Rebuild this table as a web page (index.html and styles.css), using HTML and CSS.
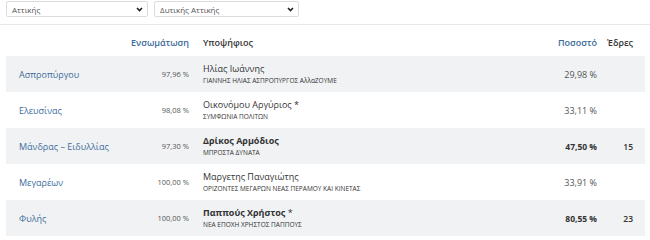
FILE: index.html
```html
<!DOCTYPE html>
<html lang="el">
<head>
<meta charset="utf-8">
<link rel="stylesheet" href="styles.css">
</head>
<body>
<div class="filters">
  <div class="select w1"><span>Αττικής</span><svg class="chev" width="7" height="5" viewBox="0 0 7 5"><path d="M1 1 L3.5 3.5 L6 1" fill="none" stroke="#222" stroke-width="1.6"/></svg></div>
  <div class="select w2"><span>Δυτικής Αττικής</span><svg class="chev" width="7" height="5" viewBox="0 0 7 5"><path d="M1 1 L3.5 3.5 L6 1" fill="none" stroke="#222" stroke-width="1.6"/></svg></div>
</div>
<div class="results">
  <div class="row head">
    <div class="c1"></div>
    <div class="c2 hl">Ενσωμάτωση</div>
    <div class="c3 hd">Υποψήφιος</div>
    <div class="c4 hl">Ποσοστό</div>
    <div class="c5 hd">Έδρες</div>
  </div>
  <div class="row odd">
    <div class="c1 link">Ασπροπύργου</div>
    <div class="c2 num">97,96 %</div>
    <div class="c3"><div class="cand">Ηλίας Ιωάννης</div><div class="party">ΓΙΑΝΝΗΣ ΗΛΙΑΣ ΑΣΠΡΟΠΥΡΓΟΣ ΑλλαΖΟΥΜΕ</div></div>
    <div class="c4 pct">29,98 %</div>
    <div class="c5"></div>
  </div>
  <div class="row">
    <div class="c1 link">Ελευσίνας</div>
    <div class="c2 num">98,08 %</div>
    <div class="c3"><div class="cand">Οικονόμου Αργύριος *</div><div class="party">ΣΥΜΦΩΝΙΑ ΠΟΛΙΤΩΝ</div></div>
    <div class="c4 pct">33,11 %</div>
    <div class="c5"></div>
  </div>
  <div class="row odd win">
    <div class="c1 link">Μάνδρας – Ειδυλλίας</div>
    <div class="c2 num">97,30 %</div>
    <div class="c3"><div class="cand">Δρίκος Αρμόδιος</div><div class="party">ΜΠΡΟΣΤΑ ΔΥΝΑΤΑ</div></div>
    <div class="c4 pct">47,50 %</div>
    <div class="c5 seats">15</div>
  </div>
  <div class="row">
    <div class="c1 link">Μεγαρέων</div>
    <div class="c2 num">100,00 %</div>
    <div class="c3"><div class="cand">Μαργετης Παναγιώτης</div><div class="party">ΟΡΙΖΟΝΤΕΣ ΜΕΓΑΡΩΝ ΝΕΑΣ ΠΕΡΑΜΟΥ ΚΑΙ ΚΙΝΕΤΑΣ</div></div>
    <div class="c4 pct">33,91 %</div>
    <div class="c5"></div>
  </div>
  <div class="row odd win">
    <div class="c1 link">Φυλής</div>
    <div class="c2 num">100,00 %</div>
    <div class="c3"><div class="cand">Παππούς Χρήστος <span class="star">*</span></div><div class="party">ΝΕΑ ΕΠΟΧΗ ΧΡΗΣΤΟΣ ΠΑΠΠΟΥΣ</div></div>
    <div class="c4 pct">80,55 %</div>
    <div class="c5 seats">23</div>
  </div>
</div>
</body>
</html>
```

FILE: styles.css
```css
html, body {
  margin: 0;
  padding: 0;
  background: #fff;
}
body {
  font-family: "Open Sans", "Noto Sans", sans-serif;
  color: #444;
  font-size: 9px;
}
.filters {
  display: flex;
  gap: 6px;
  padding: 1px 6px 0 6px;
  height: 23px;
  border-bottom: 1px solid #e6e8ea;
}
.select {
  box-sizing: border-box;
  height: 16px;
  border: 1px solid #dadcde;
  border-radius: 2px;
  display: flex;
  align-items: center;
  justify-content: space-between;
  padding: 0 4px 0 5px;
  font-size: 8px;
  color: #555;
}
.w1 { width: 142px; }
.w2 { width: 145px; }
.results {
  margin: 0 5px 0 6px;
}
.row {
  display: grid;
  grid-template-columns: 120px 70px 1fr 80px 45px;
  height: 36px;
  align-items: center;
}
.row.head {
  height: 31px;
  align-items: end;
  padding-bottom: 7px;
  box-sizing: border-box;
}
.row.odd {
  background: #f0f2f4;
}
.c1 { padding-left: 13px; }
.c2 { text-align: right; padding-right: 7px; }
.c3 { padding-left: 7px; }
.c4 { text-align: right; padding-right: 3px; }
.c5 { text-align: right; padding-right: 12px; }
.hl {
  color: #3a6b9a;
  font-weight: 600;
  font-size: 9px;
}
.hd {
  color: #333;
  font-weight: 600;
  font-size: 9px;
}
.c3.hd { text-align: left; }
.c5.hd { text-align: right; padding-right: 12px; }
.link {
  color: #3b6c9b;
  font-size: 9px;
}
.num {
  font-size: 7.5px;
  color: #555;
}
.pct {
  font-size: 9px;
  color: #555;
}
.cand {
  font-size: 9px;
  color: #333;
  line-height: 13px;
}
.party {
  font-size: 6.5px;
  color: #333;
  line-height: 10px;
  margin-top: 1px;
}
.win .cand { font-weight: 700; }
.win .cand .star { font-weight: 400; }
.win .pct { font-weight: 700; color: #333; font-size: 8.5px; }
.seats { font-size: 8.5px; font-weight: 600; color: #333; }
```
